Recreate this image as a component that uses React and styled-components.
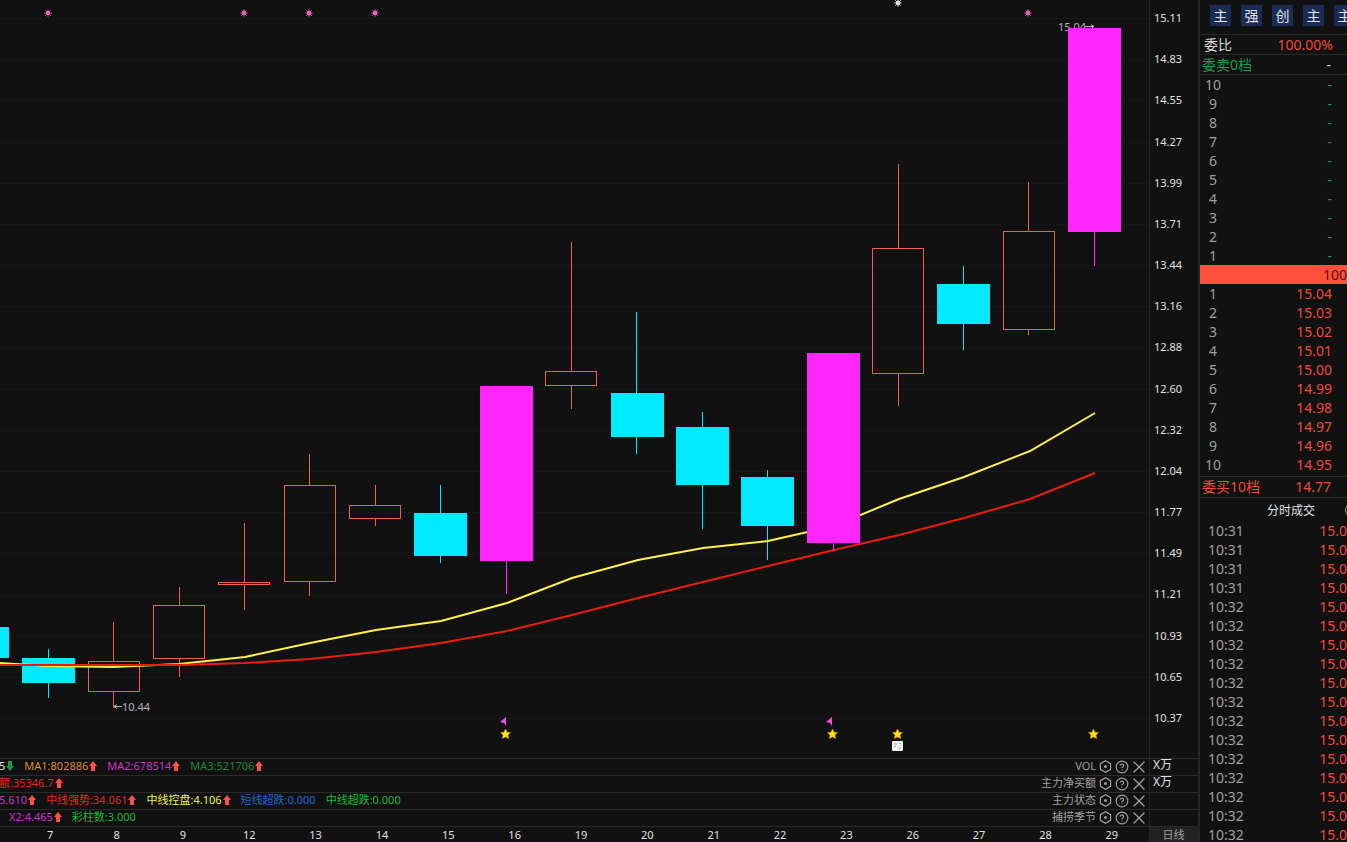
import React from "react";
import styled, { createGlobalStyle } from "styled-components";
import { CircleHelp, X } from "lucide-react";

const RED = "#f04a3a";
const GREEN = "#1f9a50";

const prices = [
  "15.11", "14.83", "14.55", "14.27", "13.99", "13.71", "13.44", "13.16", "12.88",
  "12.60", "12.32", "12.04", "11.77", "11.49", "11.21", "10.93", "10.65", "10.37",
];

const days = [7, 8, 9, 12, 13, 14, 15, 16, 19, 20, 21, 22, 23, 26, 27, 28, 29];

// left, wick x, high, body top, body bottom, low
const downCandles = [
  [-44, -18, 627, 627, 658, 658],
  [22, 48, 649, 658, 683, 698],
  [414, 440, 485, 513, 556, 563],
  [611, 636, 312, 393, 437, 454],
  [676, 702, 412, 427, 485, 529],
  [741, 767, 470, 477, 526, 560],
  [937, 963, 266, 284, 324, 350],
];

const upCandles = [
  [88, 113, 622, 661, 692, 708],
  [153, 179, 587, 605, 659, 677],
  [218, 244, 523, 582, 585, 610],
  [284, 309, 454, 485, 582, 596],
  [349, 375, 485, 505, 519, 526],
  [545, 571, 242, 371, 386, 409],
  [872, 898, 164, 248, 374, 406],
  [1003, 1028, 182, 231, 330, 335],
];

const limitCandles = [
  [480, 506, 386, 386, 561, 594],
  [807, 833, 353, 353, 543, 551],
  [1068, 1094, 28, 28, 232, 266],
];

const yellowLine =
  "0,663 48,666 113,667 179,664 245,657 310,643 376,630 441,621 507,603 572,578 638,560 703,548 768,541 834,526 899,499 964,477 1030,451 1095,413";
const redLine =
  "0,665 48,665 113,665 179,665 245,663 310,659 376,652 441,643 507,631 572,615 638,598 703,582 768,566 834,550 899,535 964,518 1030,499 1095,473";

const indicators = [
  {
    name: "VOL",
    unit: "X万",
    items: [
      { text: "5", color: "#e0e0e0", dir: "down" },
      { text: "MA1:802886", color: "#d98a35", dir: "up" },
      { text: "MA2:678514", color: "#cc33cc", dir: "up" },
      { text: "MA3:521706", color: "#1d8a3c", dir: "up" },
    ],
  },
  {
    name: "主力净买额",
    unit: "X万",
    items: [{ text: "额:35346.7", color: "#e02a20", dir: "up" }],
  },
  {
    name: "主力状态",
    items: [
      { text: "5.610", color: "#cc33cc", dir: "up" },
      { text: "中线强势:34.061", color: "#e02a20", dir: "up" },
      { text: "中线控盘:4.106", color: "#f2ee5a", dir: "up" },
      { text: "短线超跌:0.000", color: "#1f66d0" },
      { text: "中线超跌:0.000", color: "#1fb838" },
    ],
  },
  {
    name: "捕捞季节",
    items: [
      { text: "", color: "#cc33cc" },
      { text: "X2:4.465", color: "#cc33cc", dir: "up" },
      { text: "彩柱数:3.000", color: "#1fb838" },
    ],
  },
];

const tags = ["主", "强", "创", "主", "主"];
const asks = [10, 9, 8, 7, 6, 5, 4, 3, 2, 1];
const bids = ["15.04", "15.03", "15.02", "15.01", "15.00", "14.99", "14.98", "14.97", "14.96", "14.95"];
const trades = Array.from({ length: 17 }, (_, i) => (i < 4 ? "10:31" : "10:32"));

const Candle = ({ data, color, hollow }) => {
  const [left, mid, high, top, bottom, low] = data;
  return (
    <g>
      {high < top && <rect x={mid} y={high} width="1" height={top - high} fill={color} />}
      {low > bottom && <rect x={mid} y={bottom} width="1" height={low - bottom} fill={color} />}
      {hollow ? (
        <rect
          x={left + 0.5}
          y={top + 0.5}
          width="51"
          height={bottom - top - 1}
          fill="none"
          stroke={color}
        />
      ) : (
        <rect x={left} y={top} width="53" height={bottom - top} fill={color} />
      )}
    </g>
  );
};

const Burst = ({ x, y, color, core }) => (
  <g transform={`translate(${x} ${y})`}>
    <path d="M-4 0H4M0 -4V4M-3 -3L3 3M-3 3L3 -3" stroke={color} strokeWidth="1" />
    <circle r="2.4" fill={core} />
  </g>
);

const Star = ({ x }) => (
  <path
    transform={`translate(${x + 0.5} 734)`}
    d="M0 -5L1.6 -1.8L5 -1.4L2.5 1L3.2 4.6L0 2.9L-3.2 4.6L-2.5 1L-5 -1.4L-1.6 -1.8Z"
    fill="#ffe01a"
    stroke="#c98a10"
    strokeWidth="0.6"
  />
);

const Chart = () => (
  <Canvas viewBox="0 0 1149 758" role="img" aria-label="日线">
    {prices.map((p, i) => (
      <line
        key={p}
        x1="0"
        x2="1149"
        y1={Math.round(18 + i * 41.18) + 0.5}
        y2={Math.round(18 + i * 41.18) + 0.5}
        stroke="#1d1d1d"
        strokeDasharray="2 2"
      />
    ))}

    {[48, 244, 309, 375, 1028].map((x) => (
      <Burst key={x} x={x} y={13} color="#b02f80" core="#e066b4" />
    ))}
    <Burst x={898} y={3} color="#999" core="#ddd" />

    {downCandles.map((c) => (
      <Candle key={c[0]} data={c} color="#00eaff" />
    ))}
    {upCandles.map((c) => (
      <Candle key={c[0]} data={c} color="#f0604c" hollow />
    ))}

    <polyline points={yellowLine} fill="none" stroke="#fff04a" strokeWidth="2" />
    <polyline points={redLine} fill="none" stroke="#ea1c0d" strokeWidth="2" />

    <ChartText x="1058" y="31">15.04</ChartText>
    <path d="M1085 26.5H1094M1091 24.5L1094 26.5L1091 28.5" stroke="#b4b4b4" fill="none" />
    <path d="M122 706.5H114M117 704.5L114 706.5L117 708.5" stroke="#b4b4b4" fill="none" />
    <ChartText x="122" y="711">10.44</ChartText>

    {limitCandles.map((c) => (
      <Candle key={c[0]} data={c} color="#ff26ff" />
    ))}

    <path d="M500 722L506 717V726L504 723Z" fill="#ee4fe0" />
    <path d="M826 722L832 717V726L830 723Z" fill="#ee4fe0" />
    {[505, 832, 897, 1093].map((x) => (
      <Star key={x} x={x} />
    ))}
    <rect x="892" y="741" width="11" height="10" rx="1" fill="#f2f2f2" />
    <path d="M894 744H897M899 743L901 744M894 747L896 746M898 748H901" stroke="#9a9a9a" />
  </Canvas>
);

const Arrow = ({ dir }) => (
  <svg width="8" height="10" viewBox="0 0 8 10" aria-hidden="true">
    {dir === "up" ? (
      <path d="M4 0L8 5H6V10H2V5H0Z" fill="#ff5340" />
    ) : (
      <path d="M4 10L8 5H6V0H2V5H0Z" fill="#14a03c" />
    )}
  </svg>
);

const HexIcon = () => (
  <svg width="13" height="13" viewBox="0 0 13 13" fill="none" aria-hidden="true">
    <path d="M6.5 0.8L11.6 3.6V9.4L6.5 12.2L1.4 9.4V3.6Z" stroke="currentColor" strokeWidth="1.2" />
    <circle cx="6.5" cy="6.5" r="1.5" fill="currentColor" />
  </svg>
);

const Indicator = ({ name, unit, items }) => (
  <IndicatorRow>
    <Values>
      {items.map((item, i) => (
        <Value key={i} $color={item.color}>
          {item.text}
          {item.dir && <Arrow dir={item.dir} />}
        </Value>
      ))}
    </Values>
    <Tools>
      <span>{name}</span>
      <IconButton aria-label={`${name} 设置`}>
        <HexIcon />
      </IconButton>
      <IconButton aria-label={`${name} 说明`}>
        <CircleHelp size={14} strokeWidth={2} />
      </IconButton>
      <IconButton aria-label={`${name} 关闭`}>
        <X size={20} strokeWidth={1.5} />
      </IconButton>
    </Tools>
    <Unit>{unit}</Unit>
  </IndicatorRow>
);

const App = () => (
  <>
    <GlobalStyle />
    <Page>
      <Main>
        <ChartRow>
          <ChartBox>
            <Chart />
          </ChartBox>
          <PriceAxis>
            {prices.map((p) => (
              <li key={p}>{p}</li>
            ))}
          </PriceAxis>
        </ChartRow>
        {indicators.map((row) => (
          <Indicator key={row.name} {...row} />
        ))}
        <DateRow>
          <Dates>
            {days.map((d) => (
              <li key={d}>{d}</li>
            ))}
          </Dates>
          <PeriodButton>日线</PeriodButton>
        </DateRow>
      </Main>

      <Sidebar>
        <Tags>
          {tags.map((t, i) => (
            <Tag key={i}>{t}</Tag>
          ))}
        </Tags>
        <Summary $color="#d8d8d8" $start={4} $end={14}>
          <span>委比</span>
          <Figure $color={RED}>100.00%</Figure>
        </Summary>
        <Summary $color={GREEN} $start={2} $end={16}>
          <span>委卖0档</span>
          <Figure $color="#d8d8d8">-</Figure>
        </Summary>
        <Book>
          <tbody>
            {asks.map((n) => (
              <tr key={n}>
                <Level>{n}</Level>
                <Price $color={GREEN}>-</Price>
              </tr>
            ))}
          </tbody>
        </Book>
        <Band>100</Band>
        <Book>
          <tbody>
            {bids.map((p, i) => (
              <tr key={p}>
                <Level>{i + 1}</Level>
                <Price $color={RED}>{p}</Price>
              </tr>
            ))}
          </tbody>
        </Book>
        <BuySummary $color={RED} $start={2} $end={16}>
          <span>委买10档</span>
          <Figure $color={RED}>14.77</Figure>
        </BuySummary>
        <TradeTitle>
          分时成交
          <Ring />
        </TradeTitle>
        <Book>
          <tbody>
            {trades.map((t, i) => (
              <tr key={i}>
                <Time>{t}</Time>
                <TradePrice>15.0</TradePrice>
              </tr>
            ))}
          </tbody>
        </Book>
      </Sidebar>
    </Page>
  </>
);

export default App;

const GlobalStyle = createGlobalStyle`
  * {
    box-sizing: border-box;
  }

  body {
    margin: 0;
    background: #111;
    color: #e0e0e0;
    font-family: "Noto Sans", "Noto Sans CJK SC", sans-serif;
    font-size: 11px;
    line-height: 16px;
  }

  button {
    padding: 0;
    border: 0;
    background: none;
    color: inherit;
    font: inherit;
    cursor: pointer;
  }

  ul {
    margin: 0;
    padding: 0;
    list-style: none;
  }
`;

const Page = styled.div`
  display: flex;
  height: 100vh;
  overflow: hidden;
`;

const Main = styled.main`
  flex: 1;
  min-width: 0;
`;

const ChartRow = styled.div`
  display: flex;
`;

const ChartBox = styled.div`
  flex: 1;
  min-width: 0;
`;

const Canvas = styled.svg`
  display: block;
  width: 100%;
  height: auto;
`;

const ChartText = styled.text`
  fill: #b4b4b4;
  font-size: 11px;
`;

const PriceAxis = styled.ul`
  display: flex;
  flex-direction: column;
  justify-content: space-between;
  width: 49px;
  && {
    padding: 10px 0 32px 4px;
  }
  border-left: 1px solid #262626;
`;

const IndicatorRow = styled.div`
  display: flex;
  height: 17px;
  border-top: 1px solid #2a2a2a;
  line-height: 14px;
  white-space: nowrap;
`;

const Values = styled.div`
  display: flex;
  flex: 1;
  align-items: flex-start;
  gap: 10px;
  min-width: 0;
  margin-left: -1px;
`;

const Value = styled.span`
  display: flex;
  align-items: center;
  gap: 1px;
  color: ${({ $color }) => $color};
`;

const Tools = styled.div`
  display: flex;
  align-items: flex-start;
  gap: 1px;
  padding-right: 2px;
  color: #a0a0a0;
`;

const IconButton = styled.button`
  display: flex;
  align-items: center;
  justify-content: center;
  width: 16px;
  height: 15px;

  svg {
    flex: none;
  }
`;

const Unit = styled.div`
  width: 49px;
  padding-left: 3px;
  border-left: 1px solid #262626;
  font-size: 12px;
  line-height: 12px;
`;

const DateRow = styled.div`
  display: flex;
  height: 16px;
  border-top: 1px solid #2a2a2a;
`;

const Dates = styled.ul`
  display: grid;
  flex: 1;
  grid-template-columns: repeat(17, 1fr);
  && {
    padding: 0 4px 0 17px;
  }
  text-align: center;
`;

const PeriodButton = styled.button`
  width: 49px;
  && {
    background: #222;
    color: #a0a0a0;
  }
`;

const Sidebar = styled.aside`
  flex: none;
  width: 149px;
  border-left: 2px solid #262626;
  overflow: hidden;
  font-size: 14px;
  line-height: 19px;
`;

const Tags = styled.div`
  display: flex;
  gap: 10px;
  height: 35px;
  padding: 5px 0 0 10px;
  border-bottom: 1px solid #2a2a2a;
`;

const Tag = styled.button`
  flex: none;
  width: 21px;
  height: 21px;
  && {
    background: #1a2c55;
    color: #e4e4e4;
  }
`;

const Summary = styled.div`
  display: flex;
  justify-content: space-between;
  height: 20px;
  padding: 0 ${({ $end }) => $end}px 0 ${({ $start }) => $start}px;
  border-bottom: 1px solid #2a2a2a;
  color: ${({ $color }) => $color};
`;

const BuySummary = styled(Summary)`
  height: 22px;
  margin-top: 2px;
  border-top: 1px solid #2a2a2a;
`;

const Figure = styled.span`
  color: ${({ $color }) => $color};
`;

const Book = styled.table`
  width: 100%;
  border-collapse: collapse;

  td {
    height: 19px;
    padding: 0;
  }
`;

const Level = styled.td`
  width: 26px;
  color: #a0a0a0;
  text-align: center;
`;

const Price = styled.td`
  && {
    padding-right: 15px;
  }
  color: ${({ $color }) => $color};
  text-align: right;
`;

const Band = styled.div`
  height: 19px;
  background: #ff4f3b;
  color: #5a130c;
  text-align: right;
`;

const TradeTitle = styled.div`
  display: flex;
  align-items: center;
  justify-content: flex-end;
  gap: 30px;
  height: 24px;
  margin-right: -12px;
  margin-bottom: -1px;
  font-size: 12px;
`;

const Ring = styled.span`
  width: 14px;
  height: 14px;
  border: 1px solid #a0a0a0;
  border-radius: 50%;
`;

const Time = styled.td`
  && {
    padding-left: 8px;
  }
  color: #a0a0a0;
`;

const TradePrice = styled.td`
  color: ${RED};
  text-align: right;
`;
